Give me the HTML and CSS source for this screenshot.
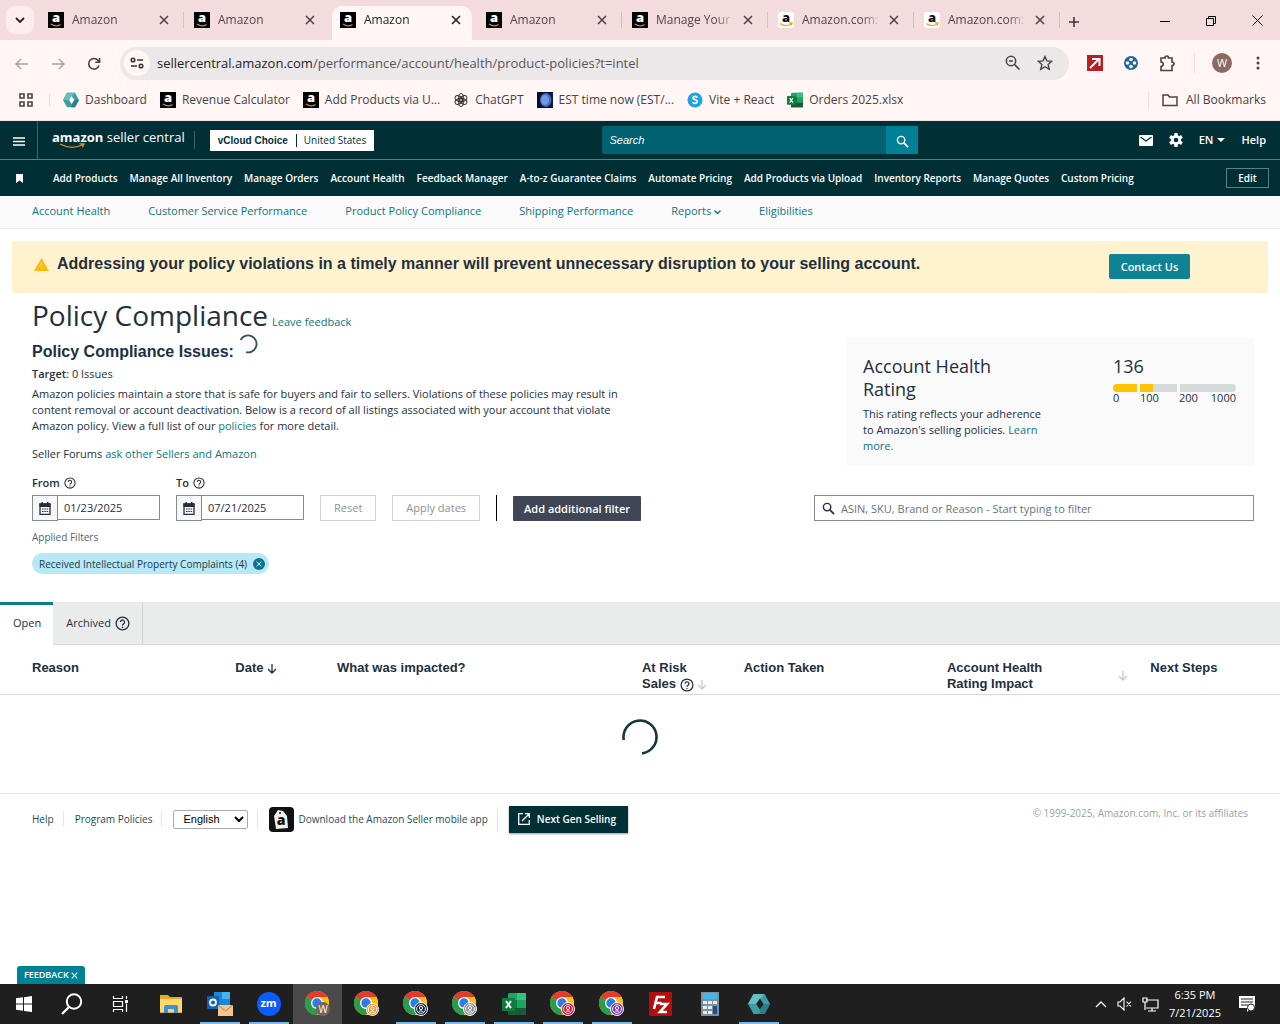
FILE: index.html
```html
<!DOCTYPE html>
<html lang="en">
<head>
    <meta charset="UTF-8">
    <title>Policy Compliance</title>
    <link rel="stylesheet" href="styles.css">
</head>
<body>
    <!-- shared icons -->
    <svg class="sprite" aria-hidden="true">
        <symbol id="amz" viewBox="0 0 16 16">
            <rect width="16" height="16" fill="#000"/>
            <text x="8" y="10" text-anchor="middle" font-family="Open Sans, sans-serif" font-weight="800" font-size="13" fill="#fff">a</text>
            <path d="M3 12q5 3.500 9.500.400" fill="none" stroke="#c98a2b" stroke-width="1.200"/>
        </symbol>
        <symbol id="amz-light" viewBox="0 0 16 16">
            <rect width="16" height="16" rx="3" fill="#fff"/>
            <text x="8" y="10" text-anchor="middle" font-family="Open Sans, sans-serif" font-weight="800" font-size="13" fill="#111">a</text>
            <path d="M2 11.500q6 4 11 .500M11 11h3l-1 2.500" fill="none" stroke="#f5a32a" stroke-width="1.300"/>
        </symbol>
        <symbol id="close" viewBox="0 0 10 10"><path d="M1 1l8 8M9 1l-8 8" fill="none" stroke="currentColor" stroke-width="1.600"/></symbol>
        <symbol id="help" viewBox="0 0 16 16">
            <circle cx="8" cy="8" r="6.800" fill="none" stroke="currentColor" stroke-width="1.400"/>
            <path d="M5.800 6.500a2.200 2.200 0 1 1 3.500 1.800C8.500 8.900 8 9.200 8 10.200M8 11.300v1.400" fill="none" stroke="currentColor" stroke-width="1.400"/>
        </symbol>
        <symbol id="glass" viewBox="0 0 14 14"><circle cx="5.500" cy="5.500" r="4" fill="none" stroke="currentColor" stroke-width="1.500"/><path d="M8.500 8.500l4.500 4.500" stroke="currentColor" stroke-width="1.800"/></symbol>
        <symbol id="calendar" viewBox="0 0 12 13">
            <path d="M1 2h10v10.300H1z" fill="none" stroke="currentColor" stroke-width="1.300"/>
            <path d="M.500 1.500h11v3.500H.500zM2.500 0h1.500v2H2.500zM8 0h1.500v2H8z" fill="currentColor"/>
            <path d="M3 7h1.500M5.300 7h1.500M7.600 7h1.500M3 9.500h1.500M5.300 9.500h1.500M7.600 9.500h1.500" stroke="currentColor" stroke-width="1.200"/>
        </symbol>
        <symbol id="arrow-down" viewBox="0 0 10 10"><path d="M5 0v9M1 5l4 4 4-4" fill="none" stroke="currentColor" stroke-width="1.300"/></symbol>
        <symbol id="hex" viewBox="0 0 24 24">
            <path d="M6 1h12l6 11-6 11H6L0 12z" fill="#3f9da3"/>
            <path d="M6 1h12l-6 7-4 4-8 0z" fill="#67bfc4"/>
            <path d="M12 23h6l6-11-8 0z" fill="#2c7f88"/>
            <path d="M13 6l4 6-4 6-4-6z" fill="var(--hole, #fff)"/>
        </symbol>
        <symbol id="excel" viewBox="0 0 24 24">
            <rect x="6" y="1" width="18" height="22" rx="1.500" fill="#21a366"/>
            <path d="M15 1h9v7h-9z" fill="#33c481"/><path d="M6 8h9v8H6z" fill="#107c41"/><path d="M6 16h18v7H6z" fill="#185c37"/>
            <rect y="6" width="13" height="13" rx="1" fill="#107c41"/>
            <path d="M4 9l5 7M9 9l-5 7" stroke="#fff" stroke-width="1.900"/>
        </symbol>
        <symbol id="chrome" viewBox="0 0 24 24">
            <circle cx="12" cy="12" r="12" fill="#fbc116"/>
            <path d="M12 12L1.600 6A12 12 0 0 1 22.400 6z" fill="#e33b2e"/>
            <path d="M12 12L1.600 6A12 12 0 0 0 12 24l5.200-9z" fill="#2a9d4a"/>
            <path d="M12 6h10.400a12 12 0 0 1-10.400 18l5.200-9z" fill="#fbc116"/>
            <circle cx="12" cy="12" r="6" fill="#fff"/><circle cx="12" cy="12" r="4.700" fill="#2f7de1"/>
        </symbol>
        <symbol id="person" viewBox="0 0 14 14">
            <circle cx="7" cy="7" r="6.500" fill="currentColor" stroke="#fff"/>
            <circle cx="7" cy="7" r="4.400" fill="none" stroke="#fff" stroke-width=".900"/>
            <circle cx="7" cy="6" r="1.600" fill="none" stroke="#fff"/><path d="M4.200 10.500q2.800-3.500 5.600 0" fill="none" stroke="#fff"/>
        </symbol>
    </svg>

    <!-- browser window -->
    <div class="tabstrip">
        <button class="tab_list" aria-label="Search tabs"><svg width="10" height="7" viewBox="0 0 10 7"><path d="M1 1l4 4 4-4" fill="none" stroke="#222" stroke-width="1.800"/></svg></button>
        <div class="tab"><svg class="fav"><use href="#amz"/></svg><span class="tab_title">Amazon</span><button aria-label="Close"><svg class="x"><use href="#close"/></svg></button></div>
        <div class="tab no_sep"><svg class="fav"><use href="#amz"/></svg><span class="tab_title">Amazon</span><button aria-label="Close"><svg class="x"><use href="#close"/></svg></button></div>
        <div class="tab active"><svg class="fav"><use href="#amz"/></svg><span class="tab_title">Amazon</span><button aria-label="Close"><svg class="x"><use href="#close"/></svg></button></div>
        <div class="tab"><svg class="fav"><use href="#amz"/></svg><span class="tab_title">Amazon</span><button aria-label="Close"><svg class="x"><use href="#close"/></svg></button></div>
        <div class="tab"><svg class="fav"><use href="#amz"/></svg><span class="tab_title">Manage Your I</span><button aria-label="Close"><svg class="x"><use href="#close"/></svg></button></div>
        <div class="tab"><svg class="fav"><use href="#amz-light"/></svg><span class="tab_title">Amazon.com:</span><button aria-label="Close"><svg class="x"><use href="#close"/></svg></button></div>
        <div class="tab"><svg class="fav"><use href="#amz-light"/></svg><span class="tab_title">Amazon.com:</span><button aria-label="Close"><svg class="x"><use href="#close"/></svg></button></div>
        <button class="new_tab" aria-label="New tab"><svg width="12" height="12" viewBox="0 0 12 12"><path d="M6 1v10M1 6h10" stroke="#40363a" stroke-width="1.600"/></svg></button>
        <div class="window_buttons">
            <button aria-label="Minimize"><svg width="10" height="10"><path d="M0 5.500h10" stroke="#000"/></svg></button>
            <button aria-label="Restore"><svg width="10" height="10"><path d="M.500 2.500h7v7h-7zM2.500 2.500v-2h7v7h-2" fill="none" stroke="#000"/></svg></button>
            <button aria-label="Close window"><svg width="11" height="11"><path d="M.500.500l10 10M10.500.500l-10 10" stroke="#000"/></svg></button>
        </div>
    </div>

    <div class="toolbar">
        <button class="faded" aria-label="Back"><svg width="14" height="12" viewBox="0 0 14 12"><path d="M13 6H1M6 1L1 6l5 5" fill="none" stroke="currentColor" stroke-width="1.500"/></svg></button>
        <button class="faded" aria-label="Forward"><svg width="14" height="12" viewBox="0 0 14 12"><path d="M1 6h12M8 1l5 5-5 5" fill="none" stroke="currentColor" stroke-width="1.500"/></svg></button>
        <button aria-label="Reload"><svg width="14" height="14" viewBox="0 0 14 14"><path d="M12 8.500A5.300 5.300 0 1 1 11 3.300L12.300 5M12.600 1v4.300H8.300" fill="none" stroke="currentColor" stroke-width="1.600"/></svg></button>
        <div class="omnibox">
            <span class="site_info"><svg width="14" height="12" viewBox="0 0 14 12"><circle cx="3" cy="3" r="1.800" fill="none" stroke="#333" stroke-width="1.500"/><circle cx="11" cy="9" r="1.800" fill="none" stroke="#333" stroke-width="1.500"/><path d="M7 3h6M1 9h6" stroke="#333" stroke-width="1.600"/></svg></span>
            <span class="url">sellercentral.amazon.com<span>/performance/account/health/product-policies?t=intel</span></span>
            <svg width="16" height="16" viewBox="0 0 16 16"><circle cx="6" cy="6" r="4.700" fill="none" stroke="#444" stroke-width="1.500"/><path d="M4 6h4M9.500 9.500l5 5" stroke="#444" stroke-width="1.600"/></svg>
            <svg width="16" height="16" viewBox="0 0 16 16"><path d="M8 1.500l1.900 4.400 4.800.400-3.600 3.200 1.100 4.700L8 11.700l-4.200 2.500 1.100-4.700L1.300 6.300l4.800-.400z" fill="none" stroke="#444" stroke-width="1.400"/></svg>
        </div>
        <div class="extensions">
            <svg width="16" height="16" viewBox="0 0 16 16"><rect width="16" height="16" fill="#b81e22"/><path d="M3 13l9-9M5 4h7.500v7" fill="none" stroke="#fff" stroke-width="2"/></svg>
            <svg width="16" height="16" viewBox="0 0 16 16"><circle cx="8" cy="8" r="7" fill="#22679a"/><circle cx="8" cy="4.500" r="1.800" fill="#fff"/><circle cx="8" cy="11.500" r="1.800" fill="#fff"/><circle cx="4.500" cy="8" r="1.800" fill="#fff"/><circle cx="11.500" cy="8" r="1.800" fill="#fff"/></svg>
            <svg width="17" height="17" viewBox="0 0 17 17"><path d="M2 3h4c0-2.600 3.500-2.600 3.500 0H13v4c2.600 0 2.600 3.500 0 3.500V15.500H2v-4c3-.500 3-4 0-4.500z" fill="none" stroke="#444" stroke-width="1.600"/></svg>
            <div class="profile"><span class="avatar">W</span></div>
            <svg width="4" height="14"><circle cx="2" cy="2" r="1.500" fill="#444"/><circle cx="2" cy="7" r="1.500" fill="#444"/><circle cx="2" cy="12" r="1.500" fill="#444"/></svg>
        </div>
    </div>

    <div class="bookmarks">
        <svg class="apps" width="14" height="14"><path d="M1 1h4v4H1zM9 1h4v4H9zM1 9h4v4H1zM9 9h4v4H9z" fill="none" stroke="#444" stroke-width="1.600"/></svg>
        <a href="#"><svg><use href="#hex"/></svg>Dashboard</a>
        <a href="#"><svg><use href="#amz"/></svg>Revenue Calculator</a>
        <a href="#"><svg><use href="#amz"/></svg>Add Products via U...</a>
        <a href="#"><svg viewBox="0 0 16 16"><g fill="none" stroke="#333" stroke-width="1"><ellipse cx="8" cy="5.500" rx="2.600" ry="4"/><ellipse cx="8" cy="5.500" rx="2.600" ry="4" transform="rotate(60 8 8)"/><ellipse cx="8" cy="5.500" rx="2.600" ry="4" transform="rotate(120 8 8)"/><ellipse cx="8" cy="5.500" rx="2.600" ry="4" transform="rotate(180 8 8)"/><ellipse cx="8" cy="5.500" rx="2.600" ry="4" transform="rotate(240 8 8)"/><ellipse cx="8" cy="5.500" rx="2.600" ry="4" transform="rotate(300 8 8)"/></g></svg>ChatGPT</a>
        <a href="#"><svg viewBox="0 0 16 16"><rect width="16" height="16" fill="#050f2c"/><ellipse cx="9" cy="8" rx="6" ry="7" fill="#3f6fbe"/><ellipse cx="8" cy="8" rx="4" ry="5" fill="#6c9be0"/><path d="M11 1q7 7 0 14h5V1z" fill="#0b1c44"/></svg>EST time now (EST/...</a>
        <a href="#"><svg viewBox="0 0 16 16"><circle cx="8" cy="8" r="7.500" fill="#1ba4e6"/><path d="M10.500 5.500Q8 3.500 6 5.300C4.800 7.500 11 7.500 10.300 10 9 12.200 6.500 11.300 5.300 10.200" fill="none" stroke="#fff" stroke-width="1.600"/></svg>Vite + React</a>
        <a href="#"><svg><use href="#excel"/></svg>Orders 2025.xlsx</a>
        <a href="#" class="all"><svg viewBox="0 0 16 16"><path d="M1 3h5l1.500 2H15v8.500H1z" fill="none" stroke="#444" stroke-width="1.500"/></svg>All Bookmarks</a>
    </div>

    <!-- seller central -->
    <header class="topbar">
        <button class="menu" aria-label="Menu"><svg width="12" height="9"><path d="M0 1h12M0 4.500h12M0 8h12" stroke="#fff" stroke-width="1.300"/></svg></button>
        <a href="#" class="logo"><span><b>amazon</b> seller central</span><svg width="27" height="6" viewBox="0 0 27 6"><path d="M1 1q12 6.500 23 .500M20.500.800h4.500l-1.500 3.500" fill="none" stroke="#d98f35" stroke-width="1.300"/></svg></a>
        <button class="account"><b>vCloud Choice</b><span>United States</span></button>
        <form class="search">
            <input type="text" placeholder="Search" aria-label="Search">
            <button aria-label="Search"><svg width="13" height="13"><use href="#glass"/></svg></button>
        </form>
        <div class="top_links">
            <a href="#" aria-label="Messages"><svg width="14" height="11" viewBox="0 0 14 11"><rect width="14" height="11" rx="1" fill="#fff"/><path d="M1.500 2L7 6l5.500-4" fill="none" stroke="#002f36" stroke-width="1.200"/></svg></a>
            <a href="#" aria-label="Settings"><svg width="14" height="14" viewBox="0 0 14 14"><path d="M7 0v14M1 3.500l12 7M1 10.500l12-7" stroke="#fff" stroke-width="3.400"/><circle cx="7" cy="7" r="3.700" fill="#002f36" stroke="#fff" stroke-width="2.800"/></svg></a>
            <a href="#">EN <svg width="8" height="4"><path d="M0 0h8L4 4z" fill="#fff"/></svg></a>
            <a href="#">Help</a>
        </div>
    </header>

    <nav class="favorites">
        <svg width="7" height="9"><path d="M0 0h7v9L3.500 6.500 0 9z" fill="#fff"/></svg>
        <div class="fav_links">
            <a href="#">Add Products</a>
            <a href="#">Manage All Inventory</a>
            <a href="#">Manage Orders</a>
            <a href="#">Account Health</a>
            <a href="#">Feedback Manager</a>
            <a href="#">A-to-z Guarantee Claims</a>
            <a href="#">Automate Pricing</a>
            <a href="#">Add Products via Upload</a>
            <a href="#">Inventory Reports</a>
            <a href="#">Manage Quotes</a>
            <a href="#">Custom Pricing</a>
        </div>
        <button class="edit">Edit</button>
    </nav>

    <nav class="subnav">
        <a href="#">Account Health</a>
        <a href="#">Customer Service Performance</a>
        <a href="#">Product Policy Compliance</a>
        <a href="#">Shipping Performance</a>
        <a href="#">Reports <svg width="7" height="5"><path d="M.500.500l3 3 3-3" fill="none" stroke="currentColor" stroke-width="1.300"/></svg></a>
        <a href="#">Eligibilities</a>
    </nav>

    <main>
        <div class="alert">
            <svg width="15" height="13" viewBox="0 0 15 13"><path d="M7.500 0L15 13H0z" fill="#fdb913"/><path d="M7.500 4.500v4M7.500 9.500V11" stroke="#fbdc80" stroke-width="1.200"/></svg>
            <strong>Addressing your policy violations in a timely manner will prevent unnecessary disruption to your selling account.</strong>
            <button class="contact">Contact Us</button>
        </div>

        <div class="title">
            <h1>Policy Compliance</h1>
            <a href="#">Leave feedback</a>
        </div>

        <div class="overview">
            <section class="intro">
                <h2>Policy Compliance Issues: <svg width="20" height="20" viewBox="0 0 20 20"><path d="M2.500 6A8.500 8.500 0 1 1 8 18.200" fill="none" stroke="#35525a" stroke-width="1.800"/></svg></h2>
                <p class="target"><b>Target</b>: 0 Issues</p>
                <p class="policy_text">Amazon policies maintain a store that is safe for buyers and fair to sellers. Violations of these policies may result in content removal or account deactivation. Below is a record of all listings associated with your account that violate Amazon policy. View a full list of our <a href="#">policies</a> for more detail.</p>
                <p>Seller Forums <a href="#">ask other Sellers and Amazon</a></p>
            </section>
            <section class="rating">
                <div>
                    <h3>Account Health Rating</h3>
                    <p>This rating reflects your adherence to Amazon's selling policies. <a href="#">Learn more.</a></p>
                </div>
                <div class="score">
                    <div class="score_value">136</div>
                    <div class="meter"><i class="full"></i><i class="part"></i><i class="rest"></i></div>
                    <div class="scale"><span>0</span><span>100</span><span>200</span><span>1000</span></div>
                </div>
            </section>
        </div>

        <form class="filters">
            <div class="field">
                <label for="from">From <svg width="12" height="12"><use href="#help"/></svg></label>
                <div class="date"><span><svg width="12" height="13"><use href="#calendar"/></svg></span><input type="text" id="from" value="01/23/2025"></div>
            </div>
            <div class="field">
                <label for="to">To <svg width="12" height="12"><use href="#help"/></svg></label>
                <div class="date"><span><svg width="12" height="13"><use href="#calendar"/></svg></span><input type="text" id="to" value="07/21/2025"></div>
            </div>
            <button type="button" class="plain">Reset</button>
            <button type="button" class="plain">Apply dates</button>
            <span class="divider"></span>
            <button type="button" class="dark">Add additional filter</button>
            <div class="table_search">
                <svg width="13" height="13"><use href="#glass"/></svg>
                <input type="text" aria-label="Filter" placeholder="ASIN, SKU, Brand or Reason - Start typing to filter">
            </div>
        </form>

        <div class="applied">
            <div>Applied Filters</div>
            <span class="chip">Received Intellectual Property Complaints (4) <button aria-label="Remove"><svg width="6" height="6"><use href="#close"/></svg></button></span>
        </div>

        <div class="list_tabs">
            <button class="selected">Open</button>
            <button>Archived <svg width="15" height="15"><use href="#help"/></svg></button>
        </div>

        <div class="table_head">
            <table>
                <thead>
                    <tr>
                        <th class="w2">Reason</th>
                        <th class="w1">Date <svg width="10" height="10"><use href="#arrow-down"/></svg></th>
                        <th class="w3">What was impacted?</th>
                        <th class="w1">At Risk<br>Sales <svg width="14" height="14"><use href="#help"/></svg> <svg class="dim" width="10" height="10"><use href="#arrow-down"/></svg></th>
                        <th class="w2">Action Taken</th>
                        <th class="w2"><div class="impact">Account Health<br>Rating Impact <svg class="dim" width="10" height="10"><use href="#arrow-down"/></svg></div></th>
                        <th class="w1">Next Steps</th>
                    </tr>
                </thead>
            </table>
        </div>
        <div class="loading"><svg width="38" height="38" viewBox="0 0 38 38"><path d="M2.800 22A16.500 16.500 0 1 1 21 35.400" fill="none" stroke="#16353d" stroke-width="2.600"/></svg></div>

        <footer>
            <a href="#">Help</a>
            <a href="#">Program Policies</a>
            <div class="foot_item"><select aria-label="Language"><option>English</option></select></div>
            <a href="#" class="app">
                <svg width="25" height="25" viewBox="0 0 25 25"><rect width="25" height="25" rx="4" fill="#111"/><path d="M9 3l5 1 4 5 1 12-12 1L5 9z" fill="#f3efe9"/><circle cx="11" cy="6" r="1" fill="#111"/><text x="12" y="18" text-anchor="middle" font-family="Open Sans, sans-serif" font-size="14" font-weight="800" fill="#111">a</text></svg>
                Download the Amazon Seller mobile app
            </a>
            <button class="next_gen"><svg width="12" height="12" viewBox="0 0 12 12"><path d="M5 .700H.700v10.600h10.600V7M7 .700h4.300V5M11 1L4 8" fill="none" stroke="#fff" stroke-width="1.300"/></svg>Next Gen Selling</button>
            <small>© 1999-2025, Amazon.com, Inc. or its affiliates</small>
        </footer>

        <button class="feedback">FEEDBACK <svg width="7" height="7"><use href="#close"/></svg></button>
    </main>

    <!-- windows taskbar -->
    <div class="taskbar">
        <button class="sys" aria-label="Start"><svg width="16" height="16" viewBox="0 0 16 16"><path d="M0 2.300l7-1v6.300H0zM8 1.200L16 0v7.600H8zM0 8.600h7v6.200l-7-1zM8 8.600h8V16l-8-1.100z" fill="#fff"/></svg></button>
        <button class="sys" aria-label="Search"><svg width="22" height="22" viewBox="0 0 22 22"><circle cx="13" cy="8.500" r="7.200" fill="none" stroke="#fff" stroke-width="2"/><path d="M8 14l-7 7" stroke="#fff" stroke-width="2.300"/></svg></button>
        <button class="sys task_view" aria-label="Task view"><svg width="17" height="16" viewBox="0 0 17 16"><path d="M1.500 0v2.500h9V0M1.500 5.500h9v5h-9zM1.500 16v-2.500h9V16M14.500 0v3M14.500 7.500V16" fill="none" stroke="#fff" stroke-width="1.200"/><path d="M13 4h3v3h-3z" fill="#fff"/></svg></button>
        <button aria-label="File Explorer"><svg width="22" height="20" viewBox="0 0 22 20"><path d="M0 1h8l2 2h12v16H0z" fill="#e3a92e"/><path d="M0 5h22v13H0z" fill="#ffd968"/><path d="M4 19v-6q0-2 2-2h10q2 0 2 2v6h-4v-4H8v4z" fill="#3b8fdb"/></svg></button>
        <button class="open" aria-label="Outlook"><svg width="26" height="26" viewBox="0 0 26 26"><path d="M7 1h16v15H7z" fill="#1a86d9"/><path d="M15 1h8v7h-8z" fill="#43b4f0"/><rect y="5" width="12" height="13" rx="1" fill="#0f63b5"/><circle cx="6" cy="11.500" r="3" fill="none" stroke="#fff" stroke-width="1.800"/><path d="M11 14h15v11H11z" fill="#f5c58d"/><path d="M11 14l7.500 6 7.500-6" fill="none" stroke="#b97b3c"/></svg></button>
        <button class="open zoom" aria-label="Zoom"><span>zm</span></button>
        <button class="current" aria-label="Chrome"><svg width="26" height="26" viewBox="0 0 26 26"><use href="#chrome" width="24" height="24"/><circle cx="18" cy="18" r="7" fill="#79625c"/><text x="18" y="22" text-anchor="middle" font-family="Open Sans, sans-serif" font-size="10" fill="#fff">W</text></svg></button>
        <button aria-label="Chrome"><svg class="p_orange" width="26" height="26" viewBox="0 0 26 26"><use href="#chrome" width="24" height="24"/><use href="#person" x="12" y="12" width="13" height="13"/></svg></button>
        <button class="open" aria-label="Chrome"><svg class="p_navy" width="26" height="26" viewBox="0 0 26 26"><use href="#chrome" width="24" height="24"/><use href="#person" x="11" y="11" width="14" height="14"/></svg></button>
        <button class="open" aria-label="Chrome"><svg class="p_gray" width="26" height="26" viewBox="0 0 26 26"><use href="#chrome" width="24" height="24"/><use href="#person" x="11" y="11" width="14" height="14"/></svg></button>
        <button class="open" aria-label="Excel"><svg width="24" height="24"><use href="#excel"/></svg></button>
        <button class="open" aria-label="Chrome"><svg class="p_red" width="26" height="26" viewBox="0 0 26 26"><use href="#chrome" width="24" height="24"/><use href="#person" x="11" y="11" width="14" height="14"/></svg></button>
        <button class="open" aria-label="Chrome"><svg class="p_purple" width="26" height="26" viewBox="0 0 26 26"><use href="#chrome" width="24" height="24"/><use href="#person" x="11" y="11" width="14" height="14"/></svg></button>
        <button aria-label="FileZilla"><svg width="23" height="24" viewBox="0 0 23 24"><rect width="23" height="24" rx="1" fill="#b50d0d"/><path d="M5 17L8 5h8M6.500 11h6M11 12h7l-7 8h7" fill="none" stroke="#fff" stroke-width="2.600"/></svg></button>
        <button aria-label="Calculator"><svg width="18" height="24" viewBox="0 0 18 24"><rect width="18" height="24" fill="#7d8f9c"/><rect x="2" y="1" width="14" height="6" fill="#41b7ea"/><path d="M2 9h4v3H2zM7 9h4v3H7zM12 9h4v3h-4zM2 14h4v3H2zM7 14h4v3H7zM2 19h4v3H2zM7 19h4v3H7z" fill="#e6ebef"/><path d="M12 14h4v8h-4z" fill="#1d4f91"/></svg></button>
        <button class="open" aria-label="Dashboard"><svg class="hex_dark" width="22" height="22"><use href="#hex"/></svg></button>
        <div class="tray">
            <svg width="12" height="7"><path d="M1 6l5-5 5 5" fill="none" stroke="#fff" stroke-width="1.300"/></svg>
            <svg width="15" height="14" viewBox="0 0 15 14"><path d="M1 5h2l4-4v12L3 9H1zM9.500 4.500l4.500 5M14 4.500l-4.500 5" fill="none" stroke="#fff" stroke-width="1.100"/></svg>
            <svg width="17" height="15" viewBox="0 0 17 15"><path d="M4 3h12v8H4M1 1h4v4H1zM3 5v8M6 14h8M10 11v3" fill="none" stroke="#fff" stroke-width="1.200"/></svg>
            <div class="clock">6:35 PM<br>7/21/2025</div>
            <svg width="16" height="18" viewBox="0 0 16 18"><path d="M0 1h16v12h-4l-4 4v-4H0z" fill="#fff"/><path d="M2 4h12M2 7h12M2 10h7" stroke="#1f1f1f"/><circle cx="12" cy="12.500" r="3.500" fill="#fff" stroke="#1f1f1f"/></svg>
        </div>
    </div>
</body>
</html>
```

FILE: styles.css
```css
/*tag*/
*{
    box-sizing: border-box;
}
body{
    margin: 0;
    min-height: 100vh;
    display: flex;
    flex-direction: column;
    font-family: "Open Sans", "Noto Sans", sans-serif;
    font-size: 11px;
    line-height: 16px;
    color: #232f3e;
    background: #fff;
}
a{
    color: #0c7580;
    text-decoration: none;
}
button, input, select{
    font: inherit;
    color: inherit;
    margin: 0;
    padding: 0;
    border: 0;
    background: none;
}
svg{
    flex: none;
    vertical-align: middle;
}
p, h1, h2, h3{
    margin: 0;
}
.sprite{
    display: none;
}

/*browser*/
.tabstrip{
    display: flex;
    align-items: flex-end;
    height: 40px;
    padding-left: 6px;
    background: #f3dbde;
    font-size: 12px;
}
.tab_list{
    width: 28px;
    height: 28px;
    margin: 0 6px 6px 0;
    border-radius: 9px;
    background: #ffecee;
}
.tab{
    display: flex;
    align-items: center;
    flex: 0 1 146px;
    min-width: 0;
    height: 34px;
    padding: 0 2px 6px 8px;
    color: #544448;
}
.tab::after{
    content: "";
    width: 1px;
    height: 16px;
    margin-left: 14px;
    background: #d9bfc4;
}
.no_sep::after, .active::after{
    background: none;
}
.active{
    flex-basis: 140px;
    margin-right: 6px;
    border-radius: 10px 10px 0 0;
    background: #fff6f5;
    color: #222;
}
.active::after{
    margin-left: 8px;
}
.fav{
    width: 16px;
    height: 16px;
    margin-right: 8px;
}
.tab_title{
    flex: 1;
    overflow: hidden;
    white-space: nowrap;
    margin-right: 8px;
    -webkit-mask-image: linear-gradient(to right, #000 75%, transparent);
}
.x{
    display: block;
    width: 10px;
    height: 10px;
}
.new_tab{
    padding: 0 8px 12px 6px;
    line-height: 12px;
}
.window_buttons{
    display: flex;
    margin-left: auto;
}
.window_buttons button{
    width: 46px;
    height: 40px;
}
.toolbar{
    display: flex;
    align-items: center;
    height: 46px;
    padding-left: 4px;
    background: #fff6f5;
    color: #444;
}
.toolbar > button{
    width: 36px;
    height: 28px;
}
.toolbar .faded{
    color: #aaa2a3;
}
.omnibox{
    display: flex;
    align-items: center;
    gap: 16px;
    flex: 1;
    height: 33px;
    margin-left: 8px;
    padding: 0 16px 0 4px;
    border-radius: 17px;
    background: #ece8ea;
}
.site_info{
    display: flex;
    align-items: center;
    justify-content: center;
    width: 26px;
    height: 26px;
    border-radius: 50%;
    background: #fff6f5;
}
.url{
    flex: 1;
    margin-left: -9px;
    font-size: 13px;
    color: #222;
}
.url span{
    color: #555;
}
.extensions{
    display: flex;
    align-items: center;
    gap: 20px;
    padding: 0 20px 0 18px;
}
.profile{
    margin: 0 4px 0 -2px;
    padding-left: 17px;
    border-left: 1px solid #f3dbde;
}
.avatar{
    display: block;
    width: 20px;
    height: 20px;
    border-radius: 50%;
    background: #8b6a62;
    color: #fff;
    line-height: 20px;
    text-align: center;
}
.bookmarks{
    display: flex;
    align-items: center;
    gap: 13px;
    height: 35px;
    padding: 0 14px 7px 19px;
    background: #fff6f5;
    border-bottom: 1px solid #f0e4e4;
    font-size: 12px;
}
.bookmarks a{
    display: flex;
    align-items: center;
    gap: 6px;
    color: #444;
    white-space: nowrap;
}
.bookmarks a svg{
    width: 16px;
    height: 16px;
}
.apps{
    box-sizing: content-box;
    padding-right: 16px;
    border-right: 1px solid #f3dbde;
}
.bookmarks .all{
    gap: 8px;
    margin-left: auto;
    padding-left: 13px;
    border-left: 1px solid #f3dbde;
}

/*header*/
.topbar{
    display: flex;
    align-items: center;
    height: 39px;
    padding-right: 14px;
    background: #002f36;
    border-bottom: 1px solid #5c7f80;
    color: #fff;
}
.menu{
    width: 38px;
    height: 38px;
    border-right: 1px solid #3d6366;
}
.logo{
    display: flex;
    flex-direction: column;
    margin-left: 14px;
    padding-right: 9px;
    border-right: 1px solid #3d6366;
    color: #fff;
    font-size: 13px;
    line-height: 12px;
    white-space: nowrap;
}
.logo svg{
    margin-left: 7px;
}
.account{
    display: flex;
    align-items: center;
    height: 21px;
    margin-left: 15px;
    padding: 0 8px;
    background: #fff;
    color: #002f36;
    font-size: 10px;
    line-height: 13px;
    white-space: nowrap;
}
.account b{
    padding-right: 8px;
    border-right: 1px solid #002f36;
    font-family: "Liberation Sans", Arial, sans-serif;
}
.account span{
    padding-left: 7px;
}
.search{
    display: flex;
    flex: none;
    width: 25%;
    height: 28px;
    margin-left: auto;
}
.search input{
    flex: 1;
    min-width: 0;
    padding: 0 8px;
    background: #006170;
    border-radius: 2px 0 0 2px;
    font-family: "Liberation Sans", Arial, sans-serif;
    font-style: italic;
}
.search input::placeholder{
    color: #fff;
}
.search button{
    width: 32px;
    background: #008296;
}
.top_links{
    display: flex;
    align-items: center;
    justify-content: flex-end;
    gap: 16px;
    width: 348px;
}
.top_links a{
    display: flex;
    align-items: center;
    gap: 4px;
    color: #fff;
    font-weight: 600;
}
.favorites{
    display: flex;
    align-items: center;
    height: 36px;
    padding: 0 11px 0 16px;
    background: #002f36;
    color: #fff;
    font-size: 10px;
    font-weight: 600;
}
.fav_links{
    display: flex;
    gap: 12px;
    flex: 1;
    margin-left: 30px;
    white-space: nowrap;
}
.fav_links a{
    color: #fff;
}
.edit{
    width: 43px;
    height: 20px;
    border: 1px solid #5c7f80;
}
.subnav{
    display: flex;
    gap: 38px;
    height: 33px;
    padding: 7px 32px 0;
    background: #fafafa;
    border-bottom: 1px solid #eee;
}

/*page*/
main{
    display: flex;
    flex-direction: column;
    flex: 1;
}
.alert{
    display: flex;
    align-items: flex-start;
    margin: 12px 12px 0;
    padding: 13px 78px 14px 22px;
    background: #fff3cf;
}
.alert svg{
    margin: 4px 8px 0 0;
}
.alert strong{
    flex: 1;
    font-family: "Liberation Sans", Arial, sans-serif;
    font-size: 16px;
    line-height: 20px;
}
.contact{
    width: 81px;
    height: 25px;
    border-radius: 2px;
    background: #0f8293;
    color: #fff;
    font-weight: 600;
}
.title{
    display: flex;
    align-items: baseline;
    gap: 4px;
    padding: 2px 32px 0;
}
h1{
    font-size: 28px;
    font-weight: 400;
    line-height: 40px;
}
.overview{
    display: flex;
    justify-content: space-between;
    align-items: flex-start;
    padding: 3px 26px 0 32px;
}
.intro{
    width: 590px;
}
.intro h2{
    display: flex;
    gap: 4px;
    height: 28px;
    font-family: "Liberation Sans", Arial, sans-serif;
    font-size: 16px;
    line-height: 28px;
}
.intro h2 svg{
    margin-top: -4px;
}
.target b{
    font-weight: 600;
}
.policy_text{
    margin: 4px 0 12px;
}
.rating{
    display: flex;
    justify-content: space-between;
    width: 408px;
    padding: 17px 18px 12px 17px;
    background: #fafafa;
}
.rating > div:first-child{
    width: 182px;
}
h3, .score_value{
    font-size: 18px;
    font-weight: 400;
    line-height: 23px;
}
.rating p{
    margin-top: 5px;
}
.score{
    width: 123px;
}
.meter{
    display: flex;
    gap: 3px;
    height: 8px;
    margin-top: 6px;
    border-radius: 4px;
    overflow: hidden;
}
.full{
    width: 24px;
    background: #ffc400;
}
.part{
    width: 37px;
    background: linear-gradient(to right, #ffc400 13px, #d5dbdb 13px);
}
.rest{
    flex: 1;
    background: #d5dbdb;
}
.scale{
    display: grid;
    grid-template-columns: 27px 39px 1fr auto;
    line-height: 12px;
}
.filters{
    display: flex;
    align-items: flex-end;
    gap: 16px;
    margin-top: 5px;
    padding: 0 26px 0 32px;
}
.field label{
    display: flex;
    align-items: center;
    gap: 4px;
    height: 24px;
    font-weight: 600;
}
.date{
    display: flex;
    width: 128px;
    height: 26px;
}
.date span{
    display: flex;
    align-items: center;
    justify-content: center;
    width: 26px;
    border: 1px solid #888c8c;
    background: #f7f7f7;
}
.date input{
    flex: 1;
    min-width: 0;
    height: 25px;
    padding-left: 6px;
    border: 1px solid #888c8c;
    border-left: 0;
}
.plain{
    height: 26px;
    padding: 0 13px;
    border: 1px solid #cfd3d3;
    color: #8d9196;
}
.divider{
    width: 1px;
    height: 26px;
    background: #000;
}
.dark{
    height: 25px;
    padding: 0 11px;
    border-radius: 1px;
    background: #3f4756;
    color: #fff;
    font-weight: 600;
}
.table_search{
    display: flex;
    align-items: center;
    gap: 6px;
    width: 440px;
    height: 26px;
    margin-left: auto;
    padding: 0 7px;
    border: 1px solid #888c8c;
}
.table_search input{
    flex: 1;
    height: 24px;
}
.table_search input::placeholder{
    color: #6a7280;
}
.applied{
    padding: 8px 32px 28px;
    font-size: 10px;
    color: #555f69;
}
.chip{
    display: inline-flex;
    align-items: center;
    gap: 6px;
    height: 21px;
    margin-top: 8px;
    padding: 0 4px 0 7px;
    border-radius: 11px;
    background: #b7e8f5;
    color: #17394d;
}
.chip button{
    display: flex;
    align-items: center;
    justify-content: center;
    width: 12px;
    height: 12px;
    border-radius: 50%;
    background: #077398;
    color: #fff;
}
.list_tabs{
    display: flex;
    height: 43px;
    background: #eaebeb;
    border-bottom: 1px solid #d5d8d8;
}
.list_tabs button{
    display: flex;
    align-items: center;
    gap: 4px;
    padding: 0 12px 0 13px;
    border-right: 1px solid #cfd4d4;
}
.list_tabs .selected{
    height: 43px;
    padding-bottom: 5px;
    border-top: 3px solid #0b7f86;
    border-right: 0;
    background: #fff;
}
.table_head{
    padding: 0 28px 0 32px;
    border-bottom: 1px solid #d5d8d8;
}
table{
    width: 100%;
    table-layout: fixed;
    border-collapse: collapse;
    font-family: "Liberation Sans", Arial, sans-serif;
    font-size: 13px;
    line-height: 16px;
}
th{
    padding: 15px 0 2px;
    text-align: left;
    vertical-align: top;
    white-space: nowrap;
}
.w1{
    width: 8.333%;
}
.w2{
    width: 16.667%;
}
.w3{
    width: 25%;
}
.impact{
    display: flex;
    align-items: center;
    justify-content: space-between;
    padding-right: 22px;
}
.dim{
    color: #c5c9cc;
}
.loading{
    display: flex;
    justify-content: center;
    padding: 23px 0 37px;
}
footer{
    display: flex;
    align-items: center;
    padding: 11px 32px 0;
    border-top: 1px solid #e3e5e5;
    font-size: 10px;
}
footer a, .foot_item{
    margin-right: 11px;
    padding-right: 9px;
    border-right: 1px solid #e3e5e5;
    color: #1d4a5a;
    white-space: nowrap;
}
footer select{
    width: 75px;
    height: 19px;
    padding-left: 5px;
    border: 1px solid #aaa;
    border-radius: 2px;
    background: #fff;
    color: #000;
    font-family: "Liberation Sans", Arial, sans-serif;
    font-size: 11px;
}
.app{
    display: flex;
    align-items: center;
    gap: 4px;
}
.next_gen{
    display: flex;
    align-items: center;
    gap: 7px;
    height: 27px;
    padding: 0 12px 0 9px;
    background: #002f36;
    color: #fff;
    font-weight: 600;
    box-shadow: 0 1px 2px #999;
}
footer small{
    margin: 0 0 12px auto;
    font-size: 10px;
    color: #9a9fa3;
}
.feedback{
    align-self: flex-start;
    width: 68px;
    height: 18px;
    margin: auto 0 0 17px;
    border-radius: 3px 3px 0 0;
    background: #008296;
    color: #fff;
    font-size: 9px;
    font-weight: 600;
}

/*taskbar*/
.taskbar{
    display: flex;
    height: 40px;
    background: #1f1f1f;
    color: #fff;
}
.taskbar button{
    display: flex;
    align-items: center;
    justify-content: center;
    width: 49px;
    height: 40px;
}
.taskbar .sys{
    width: 48px;
}
.taskbar .task_view{
    margin-right: 2px;
}
.open{
    background: linear-gradient(#76b9ed, #76b9ed) center bottom / 40px 2px no-repeat;
}
.current{
    background: #4a4a4a;
}
.zoom span{
    width: 24px;
    height: 24px;
    border-radius: 50%;
    background: #0b5cff;
    font-weight: 700;
    line-height: 22px;
}
.p_orange{
    color: #e39a3d;
}
.p_navy{
    color: #12294b;
}
.p_gray{
    color: #8c8f91;
}
.p_red{
    color: #d3142a;
}
.p_purple{
    color: #7d35c0;
}
.hex_dark{
    --hole: #1f1f1f;
}
.tray{
    display: flex;
    align-items: center;
    gap: 10px;
    margin-left: auto;
    padding-right: 25px;
}
.clock{
    font-size: 11px;
    line-height: 18px;
    text-align: center;
}
.clock + svg{
    margin-left: 8px;
}
```
